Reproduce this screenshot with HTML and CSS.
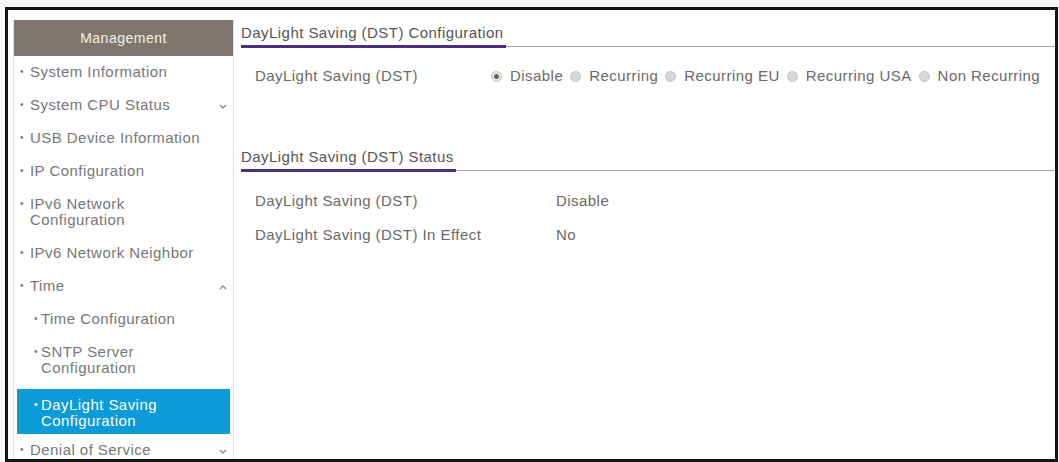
FILE: index.html
```html
<!DOCTYPE html>
<html lang="en">
<head>
    <meta charset="UTF-8">
    <title>DayLight Saving Configuration</title>
    <link rel="stylesheet" href="styles.css">
</head>
<body>

<div class="frame">
    <!-- Menu lateral -->
    <div class="sidebar">
        <div class="side-title">Management</div>
        <div class="item">System Information</div>
        <div class="item has-sub">System CPU Status
            <svg class="chev" width="8" height="5" viewBox="0 0 8 5"><path d="M1 1 L4 4 L7 1" fill="none" stroke="#8a8a8a" stroke-width="1.4"/></svg>
        </div>
        <div class="item">USB Device Information</div>
        <div class="item">IP Configuration</div>
        <div class="item">IPv6 Network<br>Configuration</div>
        <div class="item">IPv6 Network Neighbor</div>
        <div class="item has-sub">Time
            <svg class="chev" width="8" height="5" viewBox="0 0 8 5"><path d="M1 4 L4 1 L7 4" fill="none" stroke="#8a8a8a" stroke-width="1.4"/></svg>
        </div>
        <div class="item sub">Time Configuration</div>
        <div class="item sub">SNTP Server<br>Configuration</div>
        <div class="item sub active">DayLight Saving<br>Configuration</div>
        <div class="item has-sub">Denial of Service
            <svg class="chev" width="8" height="5" viewBox="0 0 8 5"><path d="M1 1 L4 4 L7 1" fill="none" stroke="#8a8a8a" stroke-width="1.4"/></svg>
        </div>
    </div>

    <!-- Contenido -->
    <div class="main">
        <div class="section-title"><span>DayLight Saving (DST) Configuration</span></div>
        <div class="row">
            <div class="label">DayLight Saving (DST)</div>
            <div class="radios">
                <label><span class="radio checked"></span>Disable</label>
                <label><span class="radio"></span>Recurring</label>
                <label><span class="radio"></span>Recurring EU</label>
                <label><span class="radio"></span>Recurring USA</label>
                <label><span class="radio"></span>Non Recurring</label>
            </div>
        </div>

        <div class="section-title status"><span>DayLight Saving (DST) Status</span></div>
        <div class="row status-row">
            <div class="label">DayLight Saving (DST)</div>
            <div class="value">Disable</div>
        </div>
        <div class="row status-row">
            <div class="label">DayLight Saving (DST) In Effect</div>
            <div class="value">No</div>
        </div>
    </div>
</div>

</body>
</html>
```
FILE: styles.css
```css
* {
    margin: 0;
    padding: 0;
    box-sizing: border-box;
}
body {
    font-family: 'Liberation Sans', Arial, sans-serif;
    background-color: #f7f7f7;
    color: #6a6a6a;
    font-size: 15px;
    letter-spacing: 0.45px;
}
.frame {
    margin: 7px 1px 0 5px;
    height: 455px;
    border: 3px solid #151515;
    background-color: #fff;
    display: flex;
    overflow: hidden;
}
.sidebar {
    width: 221px;
    margin: 10px 0 0 5px;
    border-left: 1px solid #e2e2e2;
    border-right: 1px solid #e2e2e2;
    flex-shrink: 0;
}
.side-title {
    background-color: #7f776d;
    color: #f4efe9;
    text-align: center;
    height: 36px;
    line-height: 36px;
    font-size: 14px;
    letter-spacing: 0.5px;
}
.item {
    position: relative;
    padding: 8px 0 9px 16px;
    line-height: 16px;
    color: #777;
}
.item::before {
    content: "\2022";
    position: absolute;
    left: 6px;
    font-size: 10px;
}
.item.sub {
    padding-left: 27px;
}
.item.sub::before {
    left: 20px;
}
.item.active {
    background-color: #0a9bd8;
    color: #fff;
    margin: 4px 3px 0 3px;
    padding: 8px 0 5px 24px;
}
.item.active::before {
    left: 17px;
}
.chev {
    position: absolute;
    right: 6px;
    top: 15px;
}
.main {
    flex: 1;
    padding: 14px 0 0 7px;
}
.section-title {
    border-bottom: 1px solid #a9a9a9;
    line-height: 18px;
}
.section-title span {
    display: inline-block;
    color: #555;
    padding: 0 2px 3px 0;
    border-bottom: 3px solid #4e2c7e;
    margin-bottom: -2px;
}
.section-title.status {
    margin-top: 63px;
}
.row {
    display: flex;
    padding-left: 14px;
    margin-top: 20px;
    line-height: 18px;
}
.row .label {
    width: 236px;
}
.radios {
    display: flex;
    align-items: center;
    gap: 7px;
}
.radios label {
    display: flex;
    align-items: center;
    gap: 8px;
}
.radio {
    width: 11px;
    height: 11px;
    border-radius: 50%;
    background-color: #d8d8d8;
    border: 1px solid #c4c4c4;
    position: relative;
}
.radio.checked {
    background-color: #e6e6e6;
}
.radio.checked::after {
    content: "";
    position: absolute;
    left: 2px;
    top: 2px;
    width: 5px;
    height: 5px;
    border-radius: 50%;
    background-color: #666;
}
.status-row {
    margin-top: 21px;
}
.status-row + .status-row {
    margin-top: 16px;
}
.status-row .label {
    width: 301px;
}
```
